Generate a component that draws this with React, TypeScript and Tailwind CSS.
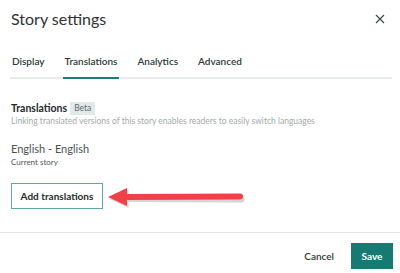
import React from 'react';

const tabs = ["Display", "Translations", "Analytics", "Advanced"];

const App: React.FC = () => {
  const font = { fontFamily: 'Lato, "Open Sans", sans-serif' };

  return (
    <div className="w-[400px] h-[273px] bg-white text-[#333] overflow-hidden" style={font}>
      {/* Header */}
      <div className="flex items-center justify-between pl-[11px] pr-[15px] pt-[8px]">
        <h1 className="text-[16px] leading-[22px] font-normal text-[#2f3333]">Story settings</h1>
        <svg className="w-[10px] h-[10px]" viewBox="0 0 10 10" fill="none" stroke="#3d4a4a" strokeWidth={1.2}>
          <path d="M1 1l8 8M9 1l-8 8" />
        </svg>
      </div>

      {/* Tabs */}
      <div className="mt-[23px] ml-[10px] mr-[8px] flex gap-[16px] border-b-2 border-[#e8ecec]">
        {tabs.map((t) => (
          <div
            key={t}
            className={
              "px-[2px] pb-[8px] text-[10px] leading-[16px] font-semibold text-[#2d3a3a] -mb-[2px] border-b-2 " +
              (t === "Translations" ? "border-[#1b7d75]" : "border-transparent")
            }
          >
            {t}
          </div>
        ))}
      </div>

      {/* Content */}
      <div className="px-[11px] pt-[22px]">
        <div className="flex items-center gap-[3px]">
          <span className="text-[10.5px] leading-[14px] font-bold text-[#1f2a2a]">Translations</span>
          <span className="bg-[#e2e9e9] text-[#5b6b6b] text-[8.5px] leading-[13px] px-[4px]">Beta</span>
        </div>
        <p className="text-[8.5px] leading-[11px] text-[#a3abab] mt-[1px]">
          Linking translated versions of this story enables readers to easily switch languages
        </p>

        <div className="mt-[14px] text-[11px] leading-[15px] text-[#4a5252]">English - English</div>
        <div className="mt-[1px] text-[8px] leading-[11px] text-[#4f5858]">Current story</div>

        <div className="relative mt-[15px] flex">
          <button className="w-[92px] h-[26px] border border-[#5fa9a3] text-[10px] font-bold text-[#1f2a2a] bg-white">
            Add translations
          </button>
          <svg
            className="absolute left-[95px] top-[2px] w-[140px] h-[26px]"
            viewBox="0 0 140 26"
          >
            <g transform="translate(1.5,2)" fill="#8a8a8a" opacity={0.35}>
              <path d="M2 12 L21 3 L21 21 Z" />
              <path d="M19 10 L134 9.5 A3 3 0 0 1 134 15.5 L19 15 Z" />
            </g>
            <g fill="#f04149">
              <path d="M2 12 L21 3 L21 21 Z" />
              <path d="M19 9 L134 8.5 A3 3 0 0 1 134 14.5 L19 15 Z" />
            </g>
          </svg>
        </div>
      </div>

      {/* Footer */}
      <div className="mt-[23px] border-t border-[#dfe3e3] flex items-center justify-end gap-[17px] pr-[7px] pt-[10px]">
        <button className="text-[10px] font-semibold text-[#2d3a3a]">Cancel</button>
        <button className="w-[42px] h-[26px] bg-[#167a72] text-white text-[10px] font-bold">Save</button>
      </div>
    </div>
  );
};

export default App;
